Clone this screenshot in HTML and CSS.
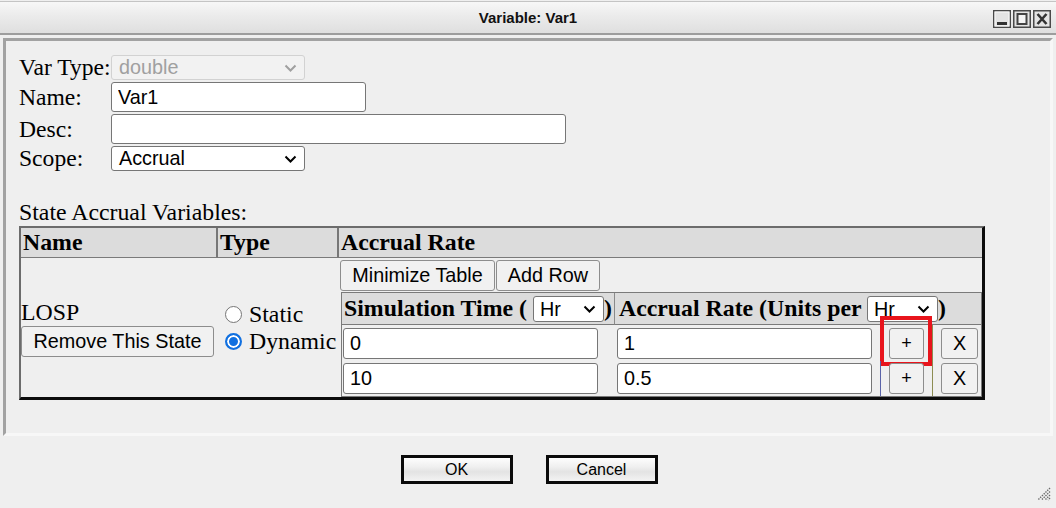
FILE: index.html
```html
<!DOCTYPE html>
<html lang="en">
<head>
<meta charset="utf-8">
<title>Variable: Var1</title>
<link rel="stylesheet" href="styles.css">
</head>
<body>
<div class="titlebar">
  <div></div>
  <div class="title">Variable: Var1</div>
  <div class="winbtns">
    <svg class="winbtn" viewBox="0 0 18 18"><rect x="0.75" y="0.75" width="16.5" height="16.5" fill="#e4e4e4" stroke="#4a4a4a" stroke-width="1.5"/><rect x="2" y="2" width="14" height="14" fill="none" stroke="#fafafa" stroke-width="1"/><rect x="4" y="12" width="10" height="3" fill="#333"/></svg>
    <svg class="winbtn" viewBox="0 0 18 18"><rect x="0.75" y="0.75" width="16.5" height="16.5" fill="#e4e4e4" stroke="#4a4a4a" stroke-width="1.5"/><rect x="4.5" y="4" width="9" height="10" fill="#f4f4f4" stroke="#444" stroke-width="2"/></svg>
    <svg class="winbtn" viewBox="0 0 18 18"><rect x="0.75" y="0.75" width="16.5" height="16.5" fill="#e4e4e4" stroke="#4a4a4a" stroke-width="1.5"/><path d="M4.5 4L13.5 14M13.5 4L4.5 14" stroke="#333" stroke-width="2.6"/></svg>
  </div>
</div>

<div class="panel">
  <div class="form">
    <span class="lbl">Var Type:</span>
    <div class="select disabled sel-main"><span>double</span><svg class="chev" viewBox="0 0 12 8"><path d="M1 1.5L6 6.5L11 1.5"/></svg></div>
    <span class="lbl">Name:</span>
    <input class="input w-name" type="text" value="Var1">
    <span class="lbl">Desc:</span>
    <input class="input w-desc" type="text" value="">
    <span class="lbl">Scope:</span>
    <div class="select sel-main"><span>Accrual</span><svg class="chev" viewBox="0 0 12 8"><path d="M1 1.5L6 6.5L11 1.5"/></svg></div>
  </div>

  <div class="section">State Accrual Variables:</div>

  <table class="states">
    <thead>
      <tr><th class="h-name">Name</th><th class="h-type">Type</th><th class="h-rate">Accrual Rate</th></tr>
    </thead>
    <tbody>
      <tr>
        <td class="c-name">
          <div class="state-name">LOSP</div>
          <button class="btn btn-remove">Remove This State</button>
        </td>
        <td class="c-type">
          <div class="radio-row"><span class="radio"></span>Static</div>
          <div class="radio-row"><span class="radio checked"></span>Dynamic</div>
        </td>
        <td class="c-rate">
          <div class="toolbar"><button class="btn btn-min">Minimize Table</button><button class="btn btn-add">Add Row</button></div>
          <table class="rates">
            <colgroup><col class="k1"><col class="k2"><col class="k3"><col class="k4"></colgroup>
            <thead>
              <tr>
                <th class="rh1">Simulation Time ( <span class="select sel-hr"><span>Hr</span><svg class="chev" viewBox="0 0 12 8"><path d="M1 1.5L6 6.5L11 1.5"/></svg></span>)</th>
                <th class="rh2" colspan="3">Accrual Rate (Units per <span class="select sel-hr"><span>Hr</span><svg class="chev" viewBox="0 0 12 8"><path d="M1 1.5L6 6.5L11 1.5"/></svg></span>)</th>
              </tr>
            </thead>
            <tbody>
              <tr class="r1">
                <td class="t1"><input class="input cell-in" type="text" value="0"></td>
                <td class="t2"><input class="input cell-in" type="text" value="1"></td>
                <td class="t3"><button class="btn btn-plus">+</button><div class="highlight"></div></td>
                <td class="t4"><button class="btn btn-x">X</button></td>
              </tr>
              <tr class="r2">
                <td class="t1"><input class="input cell-in" type="text" value="10"></td>
                <td class="t2"><input class="input cell-in" type="text" value="0.5"></td>
                <td class="t3"><button class="btn btn-plus">+</button></td>
                <td class="t4"><button class="btn btn-x">X</button></td>
              </tr>
            </tbody>
          </table>
        </td>
      </tr>
    </tbody>
  </table>
</div>

<div class="actions">
  <button class="dlg-btn">OK</button>
  <button class="dlg-btn">Cancel</button>
</div>

<svg class="grip" viewBox="0 0 14 14"><path d="M13 1L1 13M13 4.5L4.5 13M13 8L8 13M13 11L11 13" stroke="#6a6a6a" stroke-width="1.4" stroke-dasharray="1.4 1.1" fill="none"/></svg>
</body>
</html>
```

FILE: styles.css
```css
* { box-sizing: border-box; }
html, body { margin: 0; padding: 0; }
body {
  width: 1056px;
  height: 508px;
  overflow: hidden;
  position: relative;
  background: #efefef;
  font-family: "Liberation Serif", "Times New Roman", serif;
  color: #000;
}

/* Title bar */
.titlebar {
  margin-top: 1px;
  height: 34px;
  border-top: 1px solid #c4c4c4;
  border-bottom: 2px solid #9d9d9d;
  background: linear-gradient(#f7f7f7, #ebebeb 45%, #dfdfdf);
  display: grid;
  grid-template-columns: 1fr auto 1fr;
  align-items: center;
}
.title {
  font-family: "Liberation Sans", Arial, sans-serif;
  font-weight: bold;
  font-size: 15px;
  color: #111;
}
.winbtns {
  justify-self: end;
  display: flex;
  gap: 2px;
  padding-right: 5px;
  padding-top: 2px;
}
.winbtn { display: block; width: 18px; height: 18px; }

/* Panel */
.panel {
  margin: 3px 0 0 3px;
  width: 1050px;
  height: 398px;
  border: 3px solid;
  border-color: #a2a2a2 #f7f7f7 #f7f7f7 #a2a2a2;
  padding: 14px 0 0 13px;
  overflow: hidden;
}
.form {
  display: grid;
  grid-template-columns: 92px max-content;
  row-gap: 2px;
  align-items: center;
  justify-items: start;
}
.lbl { font-size: 23.6px; line-height: 25px; white-space: nowrap; }

.input {
  height: 30px;
  border: 1px solid #767676;
  border-radius: 3px;
  background: #fff;
  font: 19.8px "Liberation Sans", Arial, sans-serif;
  padding: 0 6px;
  color: #000;
  outline: none;
  margin: 0;
}
.w-name { width: 255px; }
.w-desc { width: 455px; }

.select {
  display: flex;
  align-items: center;
  justify-content: space-between;
  height: 25px;
  border: 1px solid #767676;
  border-radius: 3px;
  background: #fff;
  font: 19.8px "Liberation Sans", Arial, sans-serif;
  font-weight: normal;
  padding: 0 7px 0 7px;
  color: #000;
}
.sel-main { width: 194px; }
.select.disabled {
  border-color: #d2d2d2;
  background: #f2f2f2;
  color: #a0a0a0;
}
.chev {
  width: 13px;
  height: 8px;
  fill: none;
  stroke: currentColor;
  stroke-width: 2;
  flex: none;
}

.section {
  font-size: 23.8px;
  line-height: 27px;
  margin-top: 28px;
}

/* State table */
.states {
  border-collapse: separate;
  border-spacing: 0;
  width: 966px;
  table-layout: fixed;
  border-style: solid;
  border-width: 2px 3px 3px 2px;
  border-color: #6c6c6c #0c0c0c #0c0c0c #6c6c6c;
}
.states > thead th {
  height: 30px;
  background: #dcdcdc;
  border-bottom: 1px solid #7a7a7a;
  text-align: left;
  padding: 0 0 0 2px;
  font-size: 23.8px;
  font-weight: bold;
  line-height: 27px;
  vertical-align: middle;
}
.states > thead .h-name { width: 197px; border-right: 2px solid #777; }
.states > thead .h-type { width: 121px; border-right: 2px solid #777; }

.states > tbody > tr > td { padding: 0; vertical-align: middle; }
.state-name { font-size: 23.8px; line-height: 27px; }

.btn {
  font: 19.8px "Liberation Sans", Arial, sans-serif;
  height: 31px;
  border: 1px solid #8d8d8d;
  border-radius: 3px;
  background: #f1f1f1;
  color: #000;
  padding: 0;
  margin: 0;
  display: block;
}
.btn-remove { width: 193px; }

.states > tbody > tr > td.c-type { padding-left: 7px; }
.radio-row {
  display: flex;
  align-items: center;
  height: 27px;
  font-size: 23.8px;
}
.radio {
  width: 17px;
  height: 17px;
  border-radius: 50%;
  border: 1px solid #767676;
  background: #fff;
  margin-right: 7px;
  flex: none;
}
.radio.checked {
  border: 2px solid #1170e0;
  background: #1170e0;
  box-shadow: inset 0 0 0 2px #fff;
}

.states > tbody > tr > td.c-rate { vertical-align: top; padding: 2px 0 0 1px; }
.toolbar { display: flex; gap: 1px; margin-bottom: 1px; }
.btn-min { width: 155px; }
.btn-add { width: 104px; }

/* Rates sub-table */
.rates {
  margin-left: 1px;
  width: 641px;
  table-layout: fixed;
  border-collapse: separate;
  border-spacing: 0;
  border: 1px solid #7a7a7a;
}
.k1 { width: 273px; }
.k2 { width: 265px; }
.k3 { width: 53px; }
.k4 { width: 48px; }
.rates th {
  height: 32px;
  background: #dcdcdc;
  border-bottom: 1px solid #7a7a7a;
  text-align: left;
  font-size: 23.8px;
  font-weight: bold;
  padding: 0 0 0 2px;
  white-space: nowrap;
  vertical-align: middle;
}
.rates th.rh1 { border-right: 1px solid #8a8a8a; }
.rates th.rh2 { padding-left: 4px; }
.sel-hr {
  display: inline-flex;
  vertical-align: middle;
  width: 71px;
  height: 26px;
  padding: 0 7px 0 6px;
  margin-top: -3px;
}
.rates td { padding: 0; vertical-align: middle; }
.rates tr.r1 { height: 36px; }
.rates tr.r2 { height: 35px; }
.cell-in { width: 255px; height: 31px; display: block; }
.rates td.t1 { padding-left: 1px; }
.rates td.t2 { padding-left: 2px; }
.rates td.t3 {
  position: relative;
  border-left: 1px solid #5a63a8;
  border-right: 1px solid #8c8c52;
  padding-left: 8px;
}
.rates td.t4 { padding-left: 8px; }
.btn-plus { width: 35px; font-size: 18px; }
.btn-x { width: 37px; }

.highlight {
  position: absolute;
  left: -1px;
  top: -9px;
  width: 52px;
  height: 50px;
  border: 4px solid #e8141c;
  pointer-events: none;
}

/* Dialog buttons */
.actions {
  display: flex;
  justify-content: center;
  gap: 33px;
  margin-top: 19px;
  padding-left: 2px;
}
.dlg-btn {
  width: 112px;
  height: 29px;
  border: 3px solid #0a0a0a;
  border-radius: 0;
  background: linear-gradient(#fdfdfd, #efefef 40%, #e3e3e3 60%, #f3f3f3);
  font: 16px "Liberation Sans", Arial, sans-serif;
  color: #000;
  padding: 0;
}

.grip {
  position: absolute;
  right: 5px;
  bottom: 7px;
  width: 14px;
  height: 14px;
}
```
